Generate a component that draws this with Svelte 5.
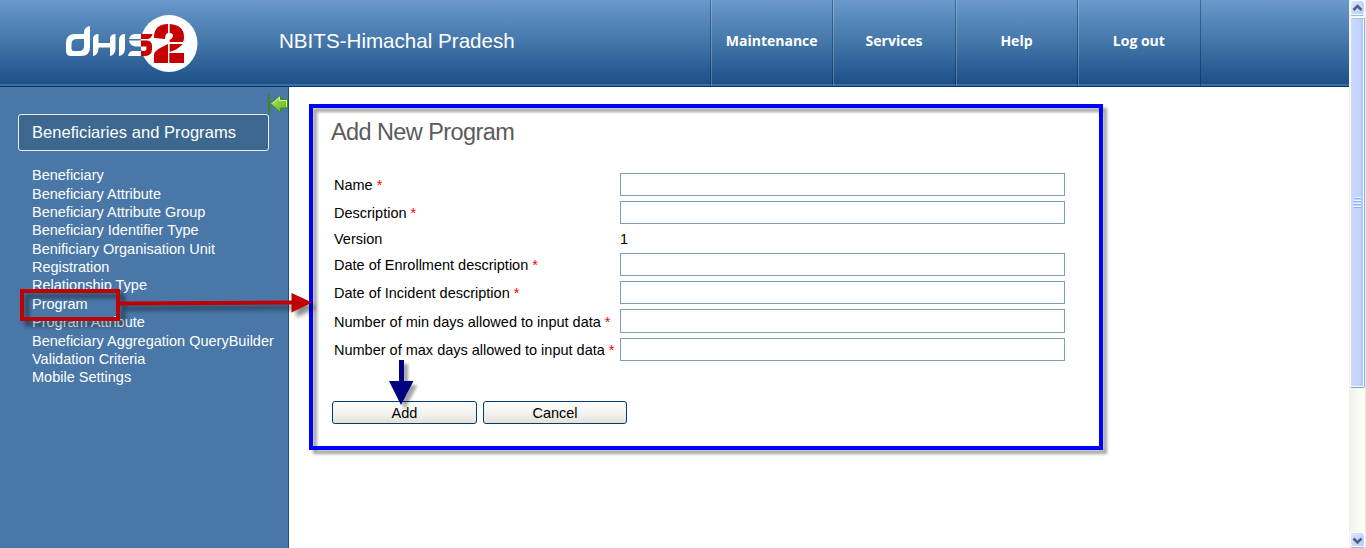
<script>
  const nav = ['Maintenance', 'Services', 'Help', 'Log out'];
  const links = [
    'Beneficiary', 'Beneficiary Attribute', 'Beneficiary Attribute Group', 'Beneficiary Identifier Type',
    'Benificiary Organisation Unit', 'Registration', 'Relationship Type', 'Program', 'Program Attribute',
    'Beneficiary Aggregation QueryBuilder', 'Validation Criteria', 'Mobile Settings'
  ];
  const fields = [
    { label: 'Name', required: true },
    { label: 'Description', required: true },
    { label: 'Version', value: '1' },
    { label: 'Date of Enrollment description', required: true },
    { label: 'Date of Incident description', required: true },
    { label: 'Number of min days allowed to input data', required: true, tall: true },
    { label: 'Number of max days allowed to input data', required: true }
  ];
</script>

<div class="window">
  <div class="page">
    <header>
      <svg class="logo" width="136" height="60" viewBox="64 14 136 60" aria-label="DHIS 2">
        <circle cx="169" cy="43.5" r="28.5" fill="#fff" />
        <g fill="#fff">
          <path d="M66 43Q66 34 75 34H84V31Q85 27 90 26V47Q90 56 81 56H71Q66 56 66 51ZM71.500 44V49Q71.500 51 73.500 51H79Q84 51 84 46V39H77Q71.500 39 71.500 44Z" fill-rule="evenodd" />
          <path d="M93 38Q94 34 98.500 34V43H110V38Q111 34 115.500 34V49Q115 55 110 56V47.500H98.500V49Q98 55 93 56Z" />
          <path d="M119 39Q120 34 125 34V49Q124.500 55 119 56Z" />
          <path d="M141 34V39H129Q130 34 136 34ZM129 40.500H141V46.500H136Q130 46 129 40.500ZM128 56Q129 51 133 51H141V56Z" />
        </g>
        <g fill="#c40000">
          <path d="M141 34H152.500Q151.500 39 147 39H141ZM141 40.500H147Q152 41 152 46V49Q152 56 145 56H141V51H144Q146.500 51 146.500 48.500V46.500H141Z" />
          <path d="M154 38V36Q155 24 168 24V33Q165 34 165 39ZM169.500 24Q184 25 184 37Q184 40 183 42H169.500V40Q173 38 173 35.500Q173 33 169.500 33ZM168 44V53H184V63H154V54Q155 51 160 48ZM169.500 44H182.500Q179 49 169.500 52Z" />
          <path d="M168.700 23V64" stroke="#fff" stroke-width="1.300" />
        </g>
      </svg>
      <h1>NBITS-Himachal Pradesh</h1>
      <nav>
        {#each nav as item}<a href="#top">{item}</a>{/each}
        <span class="end"></span>
      </nav>
    </header>

    <div class="body">
      <aside>
        <svg class="collapse" width="20" height="20" viewBox="0 0 20 20">
          <defs><linearGradient id="leaf" x2="1" y2="1"><stop stop-color="#b5e27a" /><stop offset="1" stop-color="#52b800" /></linearGradient></defs>
          <path d="M0 0H1.800V20H0Z" fill="#3f8712" />
          <path d="M2.500 9.500L12.500 1V5.500H19.500V14H12.500V18.500Z" fill="url(#leaf)" stroke="#438b1b" />
          <path d="M4.500 9.500L11.500 3.500V6.500H18.500V13" fill="none" stroke="#d4f1ad" />
        </svg>
        <h2>Beneficiaries and Programs</h2>
        <ul>
          {#each links as link}<li><a href="#top">{link}</a></li>{/each}
        </ul>
      </aside>

      <main>
        <h3>Add New Program</h3>
        <form>
          {#each fields as f}
            <div class="row" class:plain={f.value} class:tall={f.tall}>
              <span class="label">{f.label}{#if f.required}&nbsp;<em>*</em>{/if}</span>
              {#if f.value}<span class="value">{f.value}</span>{:else}<input aria-label={f.label} />{/if}
            </div>
          {/each}
          <div class="buttons">
            <button type="button">Add</button>
            <button type="button" class="cancel">Cancel</button>
          </div>
        </form>
      </main>
    </div>
  </div>

  <div class="scrollbar">
    <div class="cap"><svg width="13" height="14" viewBox="0 0 13 14"><path d="M2.500 9L6.500 5L10.500 9" fill="none" stroke="#4d6185" stroke-width="2.600" /></svg></div>
    <div class="thumb"><i></i><i></i><i></i><i></i></div>
    <div class="track"></div>
    <div class="cap"><svg width="13" height="14" viewBox="0 0 13 14"><path d="M2.500 5.500L6.500 9.500L10.500 5.500" fill="none" stroke="#4d6185" stroke-width="2.600" /></svg></div>
  </div>

  <svg class="notes" width="1366" height="548" viewBox="0 0 1366 548">
    <rect class="soft" x="311" y="106" width="790" height="342" fill="none" stroke="#00f" stroke-width="4" />
    <g class="hard">
      <rect x="22" y="291" width="96" height="28" fill="none" stroke="#c00000" stroke-width="4" />
      <path d="M119 303.500L293 302.500" stroke="#c00000" stroke-width="4" />
      <path d="M291.500 293L312 302.500L291.500 312.500Z" fill="#c00000" />
    </g>
    <path class="soft" d="M399 360H404V381H413.500L401 405L389 381H399Z" fill="#000080" />
  </svg>
</div>

<style>
  :global(body) { margin: 0; overflow: hidden; }
  * { box-sizing: border-box; }
  .window { position: relative; display: flex; width: 1366px; height: 548px; overflow: hidden; background: #fff; font-family: "Liberation Sans", Arial, sans-serif; font-size: 14.5px; }
  .page { display: flex; flex-direction: column; width: 1349px; }
  a { color: inherit; text-decoration: none; }
  h1, h2, h3 { margin: 0; font-weight: 400; }

  header { display: flex; flex: none; height: 87px; color: #fff; background: linear-gradient(#6a99cc, #4376a9 50%, #1c5088) 0 0 / 100% 84px no-repeat #3f6d9e; border-bottom: 1px solid #08396b; }
  .logo { margin: 14px 0 0 64px; flex: none; }
  h1 { width: 431px; padding: 29px 0 0 0; margin-left: 79px; font-size: 20.600px; line-height: 24px; white-space: nowrap; }
  nav { display: flex; }
  nav a { width: 122.400px; padding-top: 31px; text-align: center; font: bold 14px/20px "Open Sans", "Noto Sans", sans-serif; }
  nav a, .end { border-left: 1px solid rgba(0, 30, 70, .4); box-shadow: inset 1px 0 rgba(255, 255, 255, .22); }

  .body { display: flex; flex: 1; }
  aside { position: relative; width: 289px; padding: 27px 0 0 18px; color: #fff; background: #4977a8; border-right: 1px solid #214d7c; }
  .collapse { position: absolute; left: 268px; top: 7px; }
  h2 { width: 251px; height: 37px; padding-left: 13px; border: 1px solid #f0eee8; border-radius: 3px; background: #3c6890; font-size: 16.500px; line-height: 35px; letter-spacing: 0.050px; }
  ul { margin: 15.300px 0 0 14px; padding: 0; list-style: none; white-space: nowrap; }
  li { height: 18.360px; line-height: 18.360px; }

  main { padding: 31px 0 0 42px; }
  h3 { color: #5b5b5b; font-size: 23.500px; line-height: 28px; letter-spacing: -0.590px; }
  form { margin-top: 27px; color: #000; }
  .row { display: grid; grid-template-columns: 286px 445px; height: 28px; margin-left: 3px; line-height: 24px; align-items: start; }
  .label { white-space: nowrap; }
  .plain { height: 24px; line-height: 20px; }
  .tall { height: 29px; line-height: 26px; }
  em { color: #f00; font-style: normal; }
  input { width: 445px; height: 23px; margin: 0; padding: 0 4px; border: 1px solid #7f9db9; background: #fff; outline: 0; }
  .tall input { height: 24px; }
  .buttons { display: flex; gap: 6px; margin: 35px 0 0 1px; }
  button { width: 145px; height: 23px; padding: 0; border: 1px solid #003c74; border-radius: 3px; background: linear-gradient(#fff, #f1f1ec 60%, #e3e1d8); color: #000; font: 14.500px "Liberation Sans", Arial, sans-serif; }
  .cancel { width: 144px; }

  .scrollbar { display: flex; flex-direction: column; width: 17px; padding: 0 1px; background: linear-gradient(90deg, #eeede5, #f3f1ec 1px, #fefefb 15px, #eeede5 16px); }
  .cap { display: flex; flex: none; height: 16px; border: 1px solid #fff; border-bottom-color: #9ab6ed; border-radius: 3px; background: linear-gradient(135deg, #dbe5ff, #b8cbf7); box-shadow: inset 0 -1px #fff; }
  .thumb { display: flex; flex: none; flex-direction: column; align-items: center; justify-content: center; gap: 1px; height: 371px; margin-top: 1px; border: 1px solid #fff; border-right-color: #8fabe0; border-bottom-color: #7d9edc; border-radius: 2px; background: linear-gradient(90deg, #c9d8fc, #c3d3fd 65%, #afc7fa 90%, #fff 92%); box-shadow: inset 0 1px #a9c1f0, inset 0 -1px #fff; }
  .thumb i { width: 7px; height: 1px; margin-top: 1px; background: #8cb0f8; box-shadow: 0 -1px #eef4fe; }
  .track { flex: 1; }

  .notes { position: absolute; inset: 0; pointer-events: none; }
  .soft { filter: drop-shadow(4.500px 4.500px 1.500px rgba(0, 0, 0, .36)); }
  .hard { filter: drop-shadow(5px 5px 2px rgba(0, 0, 0, .45)); }
</style>
